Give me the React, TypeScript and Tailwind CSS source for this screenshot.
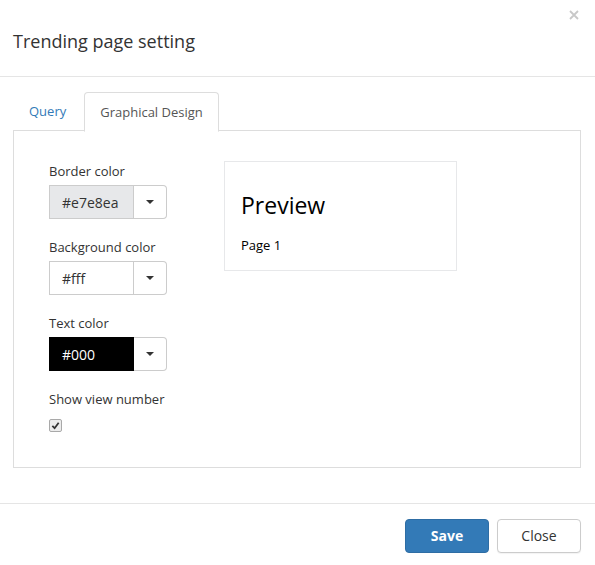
import React from "react";

function ColorPicker({ value, bg, fg, border }: { value: string; bg: string; fg: string; border: string }) {
  return (
    <div className="flex h-[34px] w-[118px]">
      <div className={`w-[85px] border ${border} ${bg} ${fg} px-[12px] flex items-center text-[14px]`}>{value}</div>
      <div className="w-[33px] border border-l-0 border-[#ccc] rounded-r-[4px] bg-white flex items-center justify-center">
        <span className="w-0 h-0 border-t-[4px] border-t-[#333] border-x-[4px] border-x-transparent" />
      </div>
    </div>
  );
}

export default function App() {
  return (
    <div className="w-[595px] h-[565px] bg-white font-['Open_Sans',sans-serif] text-[#333] flex flex-col">
      {/* Header */}
      <div className="relative h-[77px] border-b border-[#e5e5e5] px-[13px] pt-[6px] flex items-center">
        <h4 className="text-[18px] text-[#333]">Trending page setting</h4>
        <svg className="absolute right-[16px] top-[10px]" width="10" height="10" viewBox="0 0 10 10">
          <path d="M1 1 L9 9 M9 1 L1 9" stroke="#c8c8c8" strokeWidth="1.8" />
        </svg>
      </div>

      {/* Body */}
      <div className="pl-[13px] pr-[14px] pt-[15px] pb-[35px]">
        <div className="flex border-b border-[#ddd] h-[39px]">
          <div className="mr-[2px] px-[16px] flex items-center text-[13px] text-[#337ab7] pt-[2px]">Query</div>
          <div className="-mb-px px-[15px] flex items-center text-[13px] text-[#555] bg-white border border-[#ddd] border-b-white rounded-t-[4px] h-[40px] pt-[2px]">
            Graphical Design
          </div>
        </div>
        <div className="border border-t-0 border-[#ddd] pt-[30px] pl-[35px] pb-[35px] flex">
          <div className="w-[175px] flex flex-col text-[13px] font-medium">
            <label className="leading-[20px] mb-[4px]">Border color</label>
            <ColorPicker value="#e7e8ea" bg="bg-[#e7e8ea]" fg="text-[#333] font-normal" border="border-[#ccc]" />
            <label className="leading-[20px] mt-[18px] mb-[4px]">Background color</label>
            <ColorPicker value="#fff" bg="bg-white" fg="text-[#333] font-normal" border="border-[#ccc]" />
            <label className="leading-[20px] mt-[18px] mb-[4px]">Text color</label>
            <ColorPicker value="#000" bg="bg-black" fg="text-white font-normal" border="border-black" />
            <label className="leading-[20px] mt-[18px]">Show view number</label>
            <div className="mt-[10px] w-[13px] h-[13px] border border-[#a9a9a9] rounded-[2px] bg-[#ececec] flex items-center justify-center">
              <svg width="9" height="9" viewBox="0 0 10 10">
                <path d="M1.5 5.5 L4 8 L8.5 2" fill="none" stroke="#333" strokeWidth="2" />
              </svg>
            </div>
          </div>
          <div className="w-[233px] h-[110px] border border-[#e7e8ea] bg-white text-black px-[16px] pt-[27px] self-start">
            <div className="text-[23px] leading-[32px]">Preview</div>
            <div className="text-[13px] mt-[15px]">Page 1</div>
          </div>
        </div>
      </div>

      {/* Footer */}
      <div className="border-t border-[#e5e5e5] pt-[15px] px-[14px] flex justify-end gap-[8px]">
        <button className="w-[84px] h-[34px] rounded-[4px] bg-[#337ab7] border border-[#2e6da4] text-white font-bold text-[14px] pb-px">Save</button>
        <button className="w-[84px] h-[34px] rounded-[4px] bg-white border border-[#ccc] text-[#333] text-[14px] shadow-[0_1px_1px_rgba(0,0,0,0.05)] pb-px">Close</button>
      </div>
    </div>
  );
}
